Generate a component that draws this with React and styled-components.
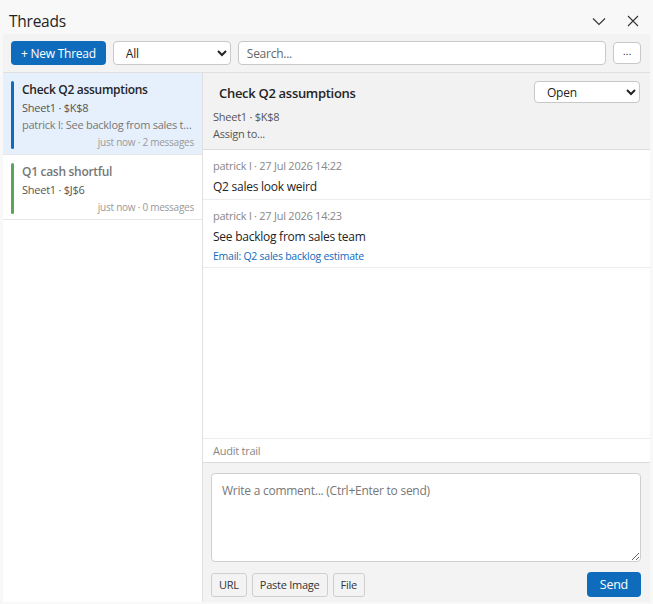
import React from 'react'
import styled, { createGlobalStyle } from 'styled-components'

const GlobalStyle = createGlobalStyle`
  html, body {
    margin: 0;
    padding: 0;
    background: #f8f8f8;
  }
  body {
    font-family: 'Open Sans', 'Noto Sans', sans-serif;
    letter-spacing: -0.25px;
    color: #242424;
  }
  button, input, select, textarea {
    letter-spacing: inherit;
  }
  * {
    box-sizing: border-box;
  }
`

const Page = styled.div`
  display: flex;
  flex-direction: column;
  height: 604px;
  padding: 0 3px 2px;
`

const TitleBar = styled.div`
  display: flex;
  align-items: center;
  justify-content: space-between;
  height: 34px;
  padding: 7px 6px 0 6px;
`

const Title = styled.h1`
  margin: 0;
  font-size: 15.5px;
  font-weight: 400;
  color: #242424;
`

const TitleIcons = styled.div`
  display: flex;
  align-items: center;
  gap: 20px;
  padding-right: 4px;
`

const IconButton = styled.button`
  display: flex;
  align-items: center;
  justify-content: center;
  border: none;
  background: transparent;
  padding: 0;
  width: 14px;
  height: 14px;
  color: #333;
`

const Panel = styled.div`
  flex: 1;
  display: flex;
  flex-direction: column;
  background: #fff;
  min-height: 0;
`

const Toolbar = styled.div`
  display: flex;
  align-items: center;
  gap: 7px;
  padding: 7px 9px 7px 8px;
  background: #f3f3f3;
  border-bottom: 1px solid #e0e0e0;
`

const PrimaryButton = styled.button`
  height: ${(p) => (p.tall ? 25 : 24)}px;
  padding: 0 ${(p) => p.pad || 10}px;
  border: none;
  border-radius: 4px;
  background: #0f6cbd;
  color: #fff;
  font-family: inherit;
  font-size: ${(p) => p.size || 12}px;
  white-space: nowrap;
`

const Select = styled.select`
  height: ${(p) => p.h || 24}px;
  width: ${(p) => p.w}px;
  padding: 0 6px 0 8px;
  border: 1px solid #c8c8c8;
  border-radius: 4px;
  background: #fff;
  font-family: inherit;
  font-size: 12px;
  color: #242424;
`

const Search = styled.input`
  flex: 1;
  height: 24px;
  padding: 0 8px;
  border: 1px solid #c8c8c8;
  border-radius: 4px;
  font-family: inherit;
  font-size: 12px;
  &::placeholder {
    color: #666;
  }
`

const MoreButton = styled.button`
  width: 28px;
  height: 22px;
  border: 1px solid #c8c8c8;
  border-radius: 4px;
  background: #fff;
  font-size: 11px;
  line-height: 1;
  padding: 0 0 4px;
  color: #333;
`

const Body = styled.div`
  flex: 1;
  display: flex;
  min-height: 0;
`

const Sidebar = styled.div`
  width: 200px;
  border-right: 1px solid #e0e0e0;
  background: #fff;
`

const ThreadItem = styled.div`
  display: flex;
  gap: 8px;
  padding: 8px 8px 5px;
  background: ${(p) => (p.selected ? '#e6f0fc' : '#fff')};
  border-bottom: 1px solid #e6e6e6;
`

const StatusBar = styled.div`
  width: 3px;
  flex-shrink: 0;
  border-radius: 2px;
  background: ${(p) => p.color};
`

const ThreadText = styled.div`
  flex: 1;
  min-width: 0;
`

const ThreadTitle = styled.div`
  font-size: 12px;
  line-height: 18px;
  font-weight: 600;
  letter-spacing: -0.3px;
  color: ${(p) => (p.muted ? '#777' : '#242424')};
`

const ThreadMeta = styled.div`
  font-size: 11px;
  line-height: 17px;
  color: ${(p) => p.color || '#555'};
  white-space: nowrap;
  overflow: hidden;
  text-overflow: ellipsis;
`

const ThreadFooter = styled.div`
  margin-top: 2px;
  font-size: 10px;
  line-height: 14px;
  color: #999;
  text-align: right;
`

const Detail = styled.div`
  flex: 1;
  display: flex;
  flex-direction: column;
  min-width: 0;
`

const Header = styled.div`
  padding: 8px 10px 7px 10px;
  background: #f2f2f2;
  border-bottom: 1px solid #dcdcdc;
`

const HeaderRow = styled.div`
  display: flex;
  align-items: center;
  justify-content: space-between;
`

const HeaderTitle = styled.div`
  padding-left: 6px;
  padding-top: 2px;
  font-size: 13px;
  font-weight: 600;
  letter-spacing: -0.3px;
  color: #242424;
`

const HeaderLine = styled.div`
  margin-top: ${(p) => p.gap || 0}px;
  font-size: 11px;
  line-height: 17px;
  color: #555;
`

const Messages = styled.div`
  flex: 1;
  min-height: 0;
`

const Message = styled.div`
  padding: 8px 10px 3px;
  border-bottom: 1px solid #ececec;
`

const MessageMeta = styled.div`
  font-size: 11px;
  line-height: 16px;
  color: #888;
`

const MessageText = styled.div`
  margin-top: 4px;
  font-size: 12px;
  line-height: 18px;
  color: #242424;
`

const MessageLink = styled.a`
  display: block;
  margin-top: 2px;
  font-size: 10.5px;
  line-height: 16px;
  color: #0f6cbd;
  text-decoration: none;
`

const AuditTrail = styled.div`
  height: 25px;
  padding: 0 10px;
  display: flex;
  align-items: center;
  border-top: 1px solid #ececec;
  border-bottom: 1px solid #dcdcdc;
  font-size: 11px;
  color: #888;
`

const Composer = styled.div`
  display: flex;
  flex-direction: column;
  gap: 10px;
  padding: 10px 9px 5px 8px;
  background: #f3f3f3;
`

const CommentBox = styled.textarea`
  height: 89px;
  padding: 8px 10px;
  border: 1px solid #cfcfcf;
  border-radius: 4px;
  font-family: inherit;
  font-size: 12px;
  resize: vertical;
  &::placeholder {
    color: #777;
  }
`

const ComposerActions = styled.div`
  display: flex;
  align-items: center;
  gap: 5px;
`

const SmallButton = styled.button`
  height: 24px;
  padding: 0 7px;
  border: 1px solid #cfcfcf;
  border-radius: 3px;
  background: #f3f3f3;
  font-family: inherit;
  font-size: 11px;
  color: #333;
`

const Spacer = styled.div`
  flex: 1;
`

const threads = [
  {
    title: 'Check Q2 assumptions',
    cell: 'Sheet1 · $K$8',
    preview: 'patrick l: See backlog from sales team',
    footer: 'just now · 2 messages',
    color: '#0f6cbd',
    selected: true,
  },
  {
    title: 'Q1 cash shortful',
    cell: 'Sheet1 · $J$6',
    footer: 'just now · 0 messages',
    color: '#5ba55b',
    muted: true,
  },
]

const messages = [
  { meta: 'patrick l · 27 Jul 2026 14:22', text: 'Q2 sales look weird' },
  {
    meta: 'patrick l · 27 Jul 2026 14:23',
    text: 'See backlog from sales team',
    link: 'Email: Q2 sales backlog estimate',
  },
]

const App = () => (
  <>
    <GlobalStyle />
    <Page>
      <TitleBar>
        <Title>Threads</Title>
        <TitleIcons>
          <IconButton aria-label="Collapse">
            <svg width="14" height="14" viewBox="0 0 14 14" fill="none" stroke="currentColor" strokeWidth="1.1">
              <path d="M1 4.5 L7 10.5 L13 4.5" />
            </svg>
          </IconButton>
          <IconButton aria-label="Close">
            <svg width="12" height="12" viewBox="0 0 12 12" fill="none" stroke="currentColor" strokeWidth="1.1">
              <path d="M1 1 L11 11 M11 1 L1 11" />
            </svg>
          </IconButton>
        </TitleIcons>
      </TitleBar>
      <Panel>
        <Toolbar>
          <PrimaryButton>+ New Thread</PrimaryButton>
          <Select w={118} defaultValue="All">
            <option>All</option>
          </Select>
          <Search placeholder="Search..." />
          <MoreButton>...</MoreButton>
        </Toolbar>
        <Body>
          <Sidebar>
            {threads.map((t) => (
              <ThreadItem key={t.title} selected={t.selected}>
                <StatusBar color={t.color} />
                <ThreadText>
                  <ThreadTitle muted={t.muted}>{t.title}</ThreadTitle>
                  <ThreadMeta>{t.cell}</ThreadMeta>
                  {t.preview && <ThreadMeta color="#777">{t.preview}</ThreadMeta>}
                  <ThreadFooter>{t.footer}</ThreadFooter>
                </ThreadText>
              </ThreadItem>
            ))}
          </Sidebar>
          <Detail>
            <Header>
              <HeaderRow>
                <HeaderTitle>Check Q2 assumptions</HeaderTitle>
                <Select w={106} h={22} defaultValue="Open">
                  <option>Open</option>
                </Select>
              </HeaderRow>
              <HeaderLine gap={5}>Sheet1 · $K$8</HeaderLine>
              <HeaderLine>Assign to...</HeaderLine>
            </Header>
            <Messages>
              {messages.map((m) => (
                <Message key={m.meta}>
                  <MessageMeta>{m.meta}</MessageMeta>
                  <MessageText>{m.text}</MessageText>
                  {m.link && <MessageLink href="#">{m.link}</MessageLink>}
                </Message>
              ))}
            </Messages>
            <AuditTrail>Audit trail</AuditTrail>
            <Composer>
              <CommentBox placeholder="Write a comment... (Ctrl+Enter to send)" />
              <ComposerActions>
                <SmallButton>URL</SmallButton>
                <SmallButton>Paste Image</SmallButton>
                <SmallButton>File</SmallButton>
                <Spacer />
                <PrimaryButton tall pad={13} size={12.5}>Send</PrimaryButton>
              </ComposerActions>
            </Composer>
          </Detail>
        </Body>
      </Panel>
    </Page>
  </>
)

export default App
